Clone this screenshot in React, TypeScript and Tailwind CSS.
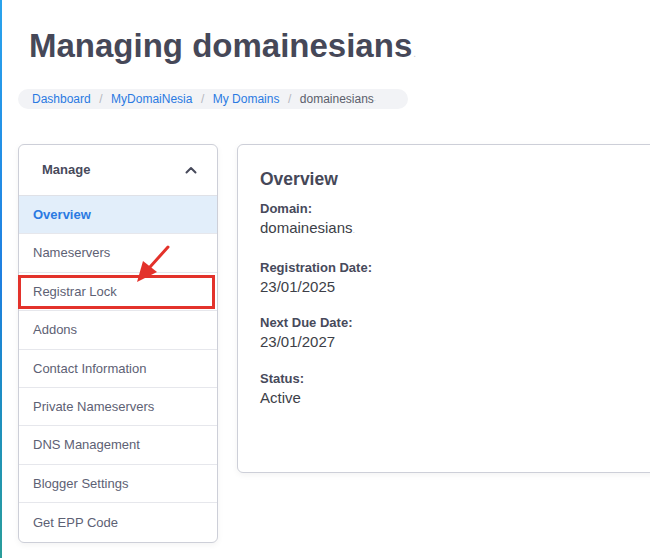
import React from 'react'

const menu = [
  'Overview',
  'Nameservers',
  'Registrar Lock',
  'Addons',
  'Contact Information',
  'Private Nameservers',
  'DNS Management',
  'Blogger Settings',
  'Get EPP Code',
]

const details = [
  { label: 'Domain:', value: 'domainesians', dot: true },
  { label: 'Registration Date:', value: '23/01/2025' },
  { label: 'Next Due Date:', value: '23/01/2027' },
  { label: 'Status:', value: 'Active' },
]

export default function App() {
  return (
    <div
      className="relative flex h-[558px] w-[650px] overflow-hidden bg-white text-[#474a5b]"
      style={{ fontFamily: '"Liberation Sans", Arial, sans-serif' }}
    >
      {/* left accent line */}
      <div className="w-[2px] shrink-0 bg-gradient-to-b from-[#2aa3ec] via-[#1f7fe0] to-[#2a9d9a]" />

      <div className="flex-1 pl-[16px] pt-[24px]">
        {/* Title */}
        <h1 className="ml-[11px] flex items-baseline text-[33px] font-bold leading-[44px] text-[#464858]">
          Managing domainesians
          <span className="ml-[1px] text-[10px] font-normal text-[#c9cad0]">.</span>
        </h1>

        {/* Breadcrumb */}
        <nav className="mt-[13px] flex h-[20px] w-[390px] items-center rounded-full bg-[#f2f3f6] pl-[14px] text-[12px] text-[#2a7ae2]">
          <span>Dashboard</span>
          <span className="mx-[8.5px] text-[#b5b7c0]">/</span>
          <span>MyDomaiNesia</span>
          <span className="mx-[8.5px] text-[#b5b7c0]">/</span>
          <span>My Domains</span>
          <span className="mx-[8.5px] text-[#b5b7c0]">/</span>
          <span className="text-[#5b5e6b]">domainesians</span>
          <span className="text-[8px] text-[#c9cad0]">.</span>
        </nav>

        <div className="mt-[35px] flex gap-[19px]">
          {/* Sidebar */}
          <div className="relative w-[200px] shrink-0">
            <div className="overflow-hidden rounded-[6px] border border-[#cdcfd8] bg-white shadow-[0_2px_6px_rgba(0,0,0,0.05)]">
              <div className="flex h-[51px] items-center justify-between border-b border-[#dfe1e7] pl-[23px] pr-[20px]">
                <span className="text-[13px] font-bold text-[#474a5b]">Manage</span>
                <svg width="12" height="8" viewBox="0 0 12 8" fill="none">
                  <path d="M1.5 6.5 6 2l4.5 4.5" stroke="#474a5b" strokeWidth="2" strokeLinecap="round" strokeLinejoin="round" />
                </svg>
              </div>
              {menu.map((item, i) => (
                <div
                  key={item}
                  className={`flex h-[38.4px] items-center pl-[14px] text-[13px] ${
                    i < menu.length - 1 ? 'border-b border-[#e6e7ec]' : ''
                  } ${i === 0 ? 'bg-[#e2eefa] font-bold text-[#2a7ae2]' : 'text-[#5d6174]'}`}
                >
                  {item}
                </div>
              ))}
            </div>

            {/* highlight box */}
            <div className="absolute left-0 top-[131px] h-[34px] w-[197px] border-[3px] border-[#e3322b]" />

            {/* arrow */}
            <svg className="absolute left-[112px] top-[100px]" width="46" height="44" viewBox="0 0 46 44" fill="none">
              <line x1="38" y1="3" x2="20" y2="23" stroke="#e3322b" strokeWidth="3" strokeLinecap="round" />
              <path d="M7 38 13 17 27 28Z" fill="#e3322b" />
            </svg>
          </div>

          {/* Main card */}
          <div className="h-[329px] w-[480px] shrink-0 rounded-[6px] border border-[#cdcfd8] bg-white px-[22px] pt-[24px] shadow-[0_2px_6px_rgba(0,0,0,0.05)]">
            <h2 className="text-[17.5px] font-bold leading-[20px] text-[#464858]">Overview</h2>
            <div className="mt-[11px] flex flex-col gap-[18.5px]">
              {details.map((d) => (
                <div key={d.label}>
                  <div className="text-[13px] font-bold leading-[18px] text-[#474a5b]">{d.label}</div>
                  <div className="text-[15px] leading-[19px] text-[#3d3f48]">
                    {d.value}
                    {d.dot && <span className="text-[9px] text-[#c9cad0]">.</span>}
                  </div>
                </div>
              ))}
            </div>
          </div>
        </div>
      </div>
    </div>
  )
}
